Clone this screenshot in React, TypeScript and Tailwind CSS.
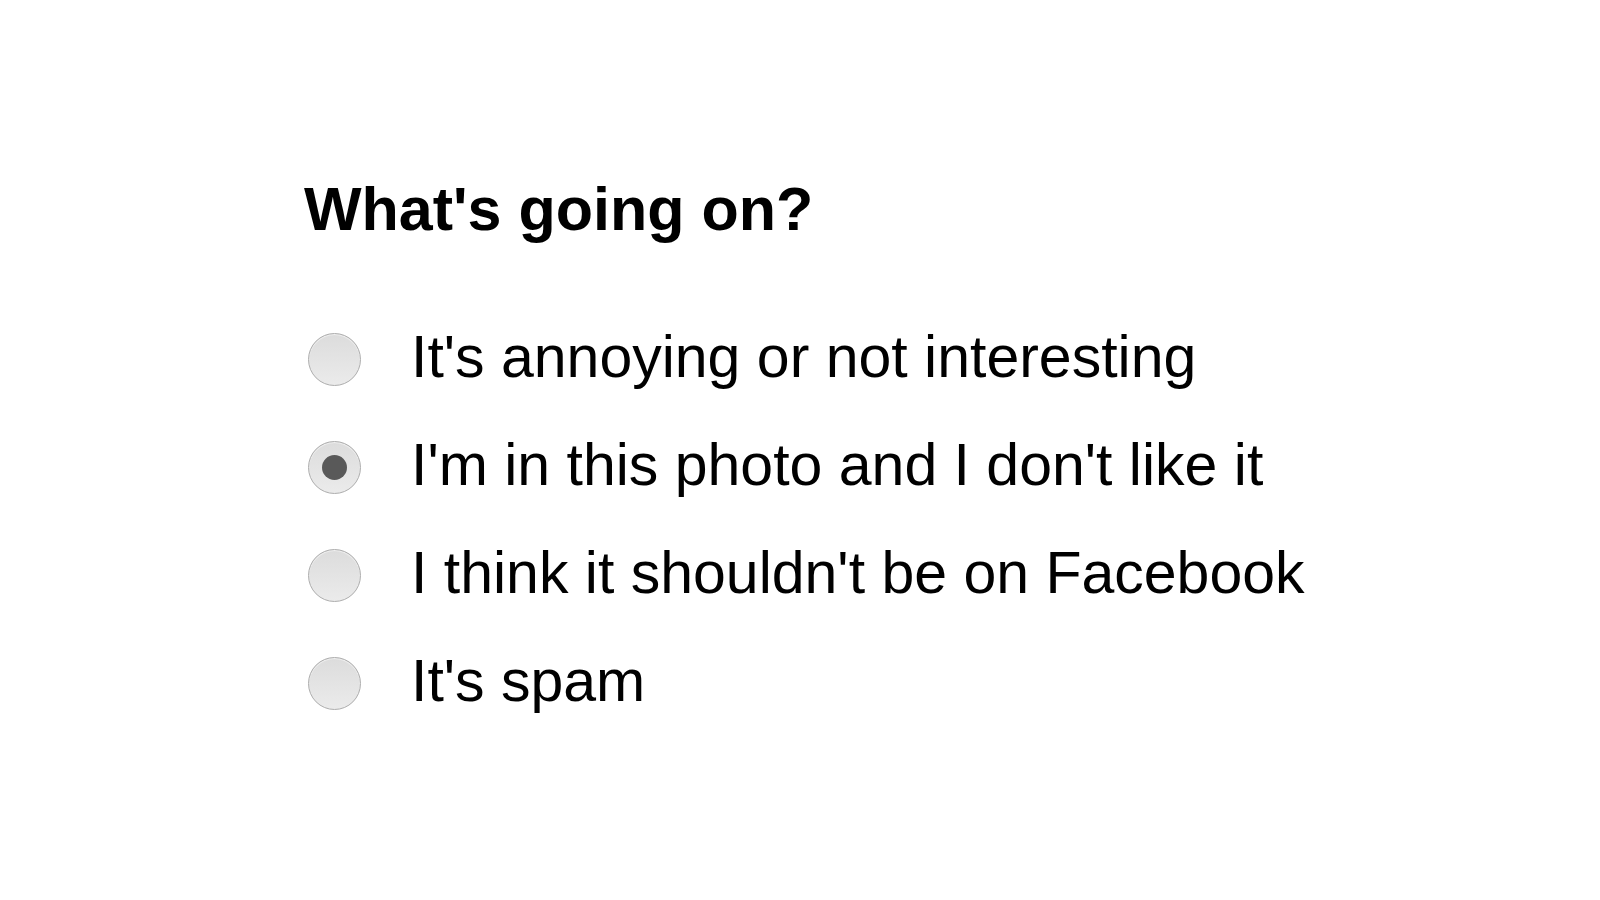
import { useState } from "react";

const reasons = [
  "It's annoying or not interesting",
  "I'm in this photo and I don't like it",
  "I think it shouldn't be on Facebook",
  "It's spam",
];

export default function App() {
  const [picked, setPicked] = useState(1);

  return (
    <main
      className="min-h-screen w-[1600px] h-[900px] bg-white pl-[304px] pt-[174px] text-black"
      style={{ fontFamily: '"Liberation Sans", Arial, sans-serif' }}
    >
      <h1 className="text-[61px] leading-[70px] font-bold">What's going on?</h1>

      <div className="mt-[61px] flex flex-col">
        {reasons.map((r, i) => (
          <label
            key={r}
            className="flex h-[108px] items-center cursor-pointer"
            onClick={() => setPicked(i)}
          >
            <span className="ml-[4px] flex h-[53px] w-[53px] shrink-0 items-center justify-center rounded-full border-[1.5px] border-[#adadad] bg-gradient-to-b from-[#dcdcdc] to-[#ebebeb] shadow-[inset_0_1px_1px_rgba(255,255,255,0.6)]">
              {picked === i && (
                <span className="h-[25px] w-[25px] rounded-full bg-[#595959]" />
              )}
            </span>
            <span className="ml-[50px] pb-[4px] text-[59px] leading-[108px] whitespace-nowrap">
              {r}
            </span>
          </label>
        ))}
      </div>
    </main>
  );
}
